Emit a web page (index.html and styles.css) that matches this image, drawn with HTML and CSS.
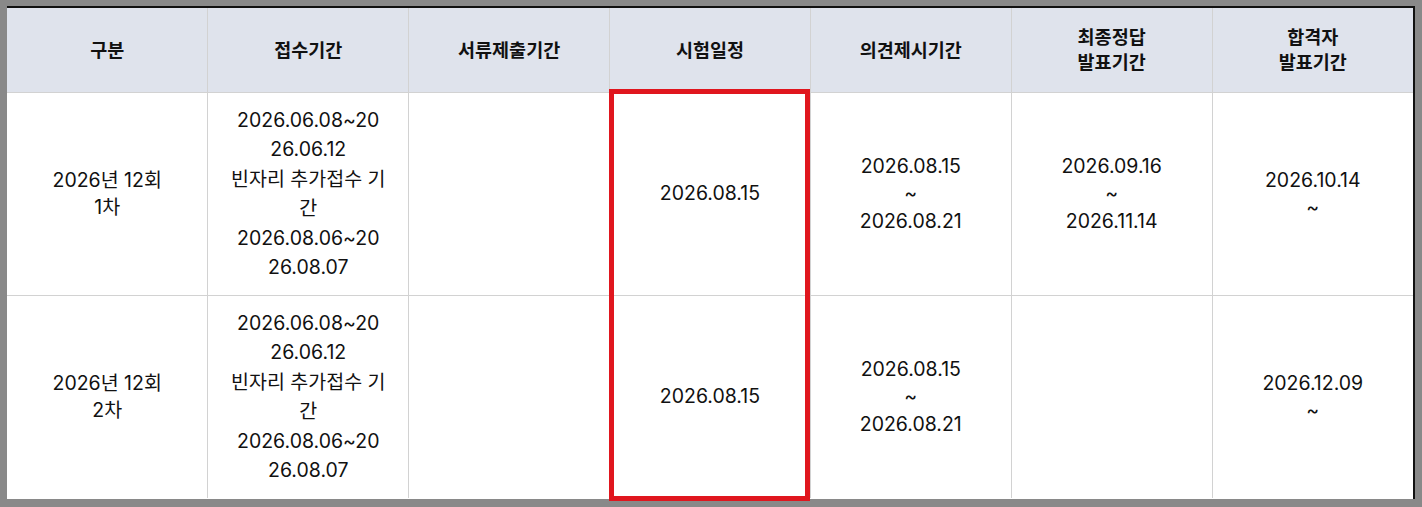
FILE: index.html
```html
<!DOCTYPE html>
<html>
<head>
<meta charset="UTF-8">
<title>시험일정</title>
<link rel="stylesheet" href="styles.css">
</head>
<body>
	<div class="frame">
	<div class="sheet">
	<table class="schedule">
		<tr class="head">
			<th>구분</th>
			<th>접수기간</th>
			<th>서류제출기간</th>
			<th>시험일정</th>
			<th>의견제시기간</th>
			<th>최종정답<br>발표기간</th>
			<th>합격자<br>발표기간</th>
		</tr>
		<tr>
			<td>2026년 12회<br>1차</td>
			<td class="period">2026.06.08~20<br>26.06.12<br>빈자리 추가접수 기<br>간<br>2026.08.06~20<br>26.08.07</td>
			<td></td>
			<td>2026.08.15</td>
			<td>2026.08.15<br>~<br>2026.08.21</td>
			<td>2026.09.16<br>~<br>2026.11.14</td>
			<td>2026.10.14<br>~</td>
		</tr>
		<tr>
			<td>2026년 12회<br>2차</td>
			<td class="period">2026.06.08~20<br>26.06.12<br>빈자리 추가접수 기<br>간<br>2026.08.06~20<br>26.08.07</td>
			<td></td>
			<td>2026.08.15</td>
			<td>2026.08.15<br>~<br>2026.08.21</td>
			<td></td>
			<td>2026.12.09<br>~</td>
		</tr>
	</table>
	<div class="mark"></div>
	</div>
	</div>
</body>
</html>
```

FILE: styles.css
```css
body {
	margin: 0;
	background-color: #898989;
	font-family: Inter, "Noto Sans CJK KR", sans-serif;
	color: #111;
}

.frame {
	padding: 6px 7px 8px 7px;
	height: 507px;
	box-sizing: border-box;
}

.sheet {
	position: relative;
	background-color: #fff;
	border-top: 2px solid #111;
	border-right: 2px solid #111;
	height: 493px;
	box-sizing: border-box;
}

.schedule {
	width: 100%;
	border-collapse: collapse;
	table-layout: fixed;
	text-align: center;
}

.schedule th, .schedule td {
	border: 1px solid #d2d2d2;
	vertical-align: middle;
}

.schedule tr:first-child th {
	border-top: 0;
}

.schedule th:first-child, .schedule td:first-child {
	border-left: 0;
}

.schedule th:last-child, .schedule td:last-child {
	border-right: 0;
}

.schedule tr:last-child td {
	border-bottom: 0;
}

.head th {
	background-color: #dfe3ec;
	height: 84px;
	font-size: 18.5px;
	font-weight: bold;
	line-height: 25px;
	padding: 0;
}

.schedule td {
	height: 202px;
	font-size: 19.5px;
	line-height: 27.5px;
	padding: 0 6px;
}

.schedule td.period {
	line-height: 29.5px;
}

.mark {
	position: absolute;
	left: 602px;
	top: 81px;
	width: 201px;
	height: 412px;
	border: 5px solid #e0161e;
	box-sizing: border-box;
}
```
